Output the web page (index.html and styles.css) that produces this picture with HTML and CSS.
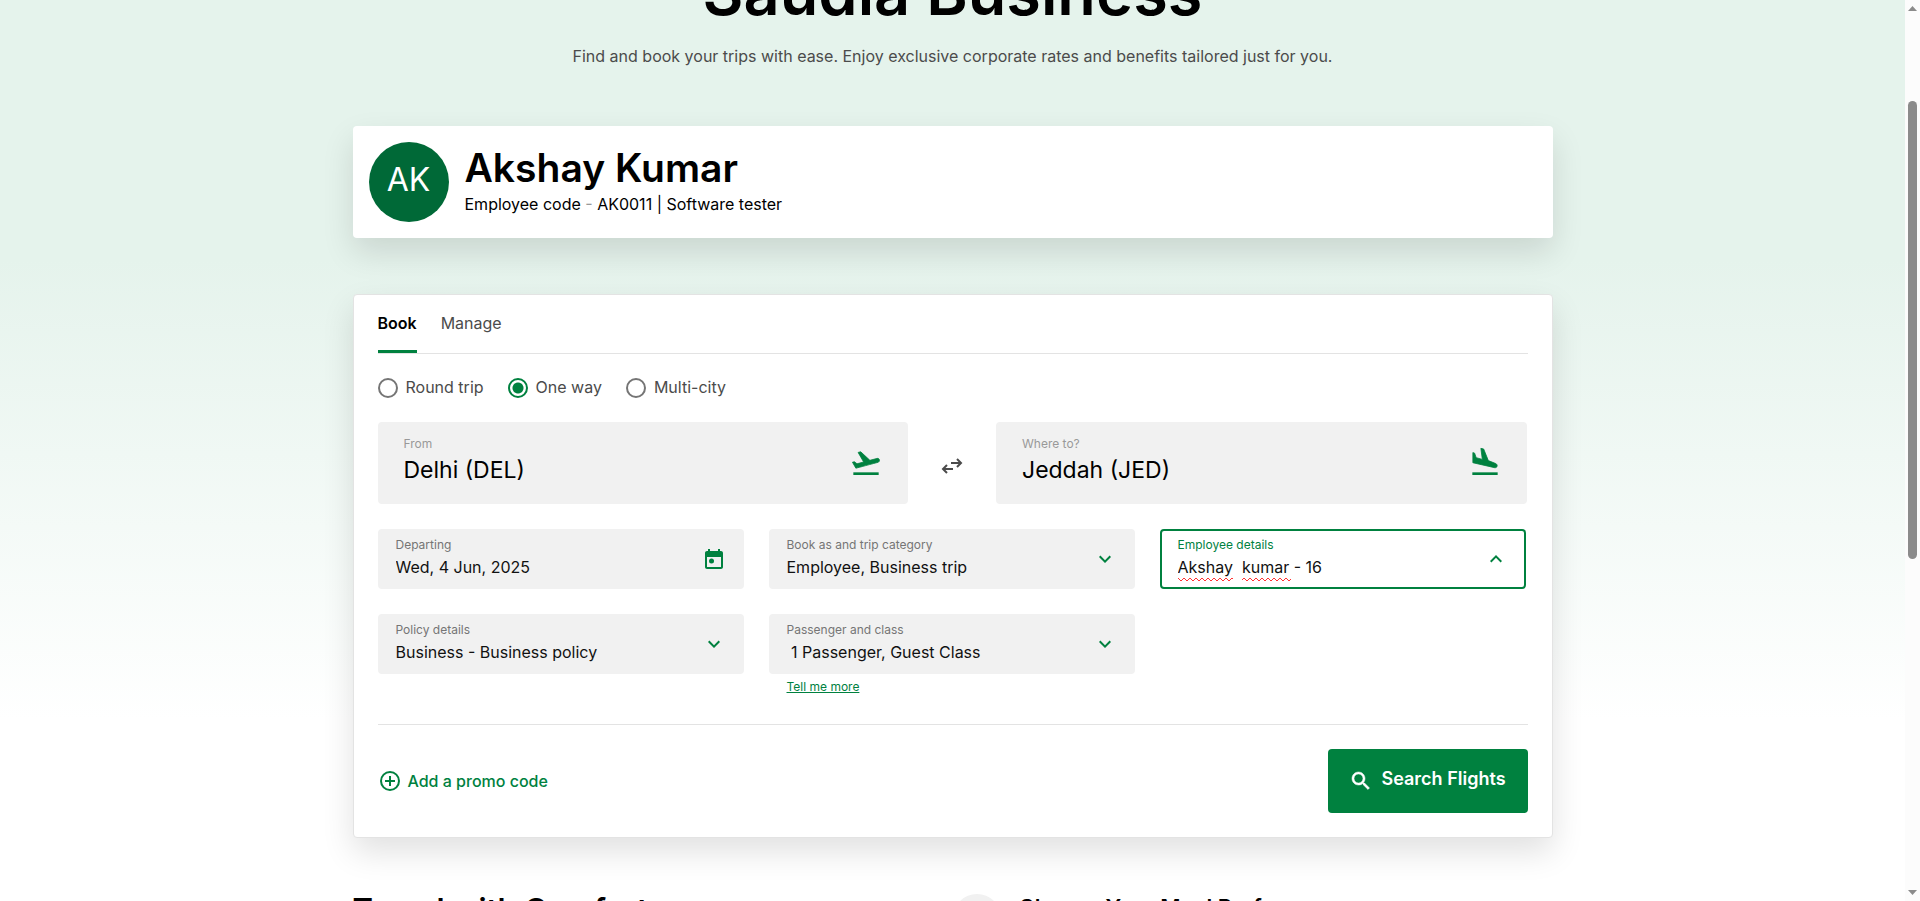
FILE: index.html
```html
<!DOCTYPE html>
<html lang="en">
<head>
<meta charset="utf-8">
<meta name="viewport" content="width=device-width, initial-scale=1">
<title>Saudia Business</title>
<link rel="stylesheet" href="styles.css">
</head>
<body>
<div class="page">
  <main class="container">
    <header class="hero">
      <h1 class="hero-title">Saudia Business</h1>
      <p class="hero-text">Find and book your trips with ease. Enjoy exclusive corporate rates and benefits tailored just for you.</p>
    </header>

    <section class="profile">
      <div class="avatar" aria-hidden="true">AK</div>
      <div class="profile-info">
        <h2 class="profile-name">Akshay Kumar</h2>
        <p class="profile-meta">Employee code <span class="dash">-</span> AK0011 | Software tester</p>
      </div>
    </section>

    <form class="booking">
      <div class="tabs" role="tablist">
        <button class="tab tab-active" type="button" role="tab" aria-selected="true">Book</button>
        <button class="tab" type="button" role="tab" aria-selected="false">Manage</button>
      </div>

      <div class="trip-types" role="radiogroup" aria-label="Trip type">
        <label class="trip-type"><input class="radio" type="radio" name="trip">Round trip</label>
        <label class="trip-type"><input class="radio" type="radio" name="trip" checked>One way</label>
        <label class="trip-type"><input class="radio" type="radio" name="trip">Multi-city</label>
      </div>

      <div class="route">
        <div class="field field-large">
          <div class="field-body">
            <label class="field-label" for="from">From</label>
            <input class="field-control" id="from" type="text" value="Delhi (DEL)">
          </div>
          <svg class="plane" viewBox="0 0 24 24" aria-hidden="true"><path d="M2.5 19h19v2h-19z"/><path class="plane-body" d="M22.07 9.64c-.21-.8-1.04-1.28-1.84-1.06L14.92 10l-6.9-6.43-1.93.51 4.14 7.17-4.97 1.33-1.97-1.54-1.45.39 2.59 4.49s7.12-1.9 16.57-4.43c.81-.23 1.28-1.05 1.07-1.85z"/></svg>
        </div>
        <button class="swap" type="button" aria-label="Swap origin and destination">
          <svg class="swap-icon" viewBox="0 0 24 24" aria-hidden="true"><path d="M11 9h10M17 5l4 4-4 4M13 15H3M7 11l-4 4 4 4"/></svg>
        </button>
        <div class="field field-large">
          <div class="field-body">
            <label class="field-label" for="to">Where to?</label>
            <input class="field-control" id="to" type="text" value="Jeddah (JED)">
          </div>
          <svg class="plane" viewBox="0 0 24 24" aria-hidden="true"><path d="M2.5 19h19v2h-19z"/><path class="plane-body" d="M2.900 4.200 4.200 4.600 5.400 8 10 9.300 8.900 1 11 1.500 14.500 10.200 20 12.400c1.900.9 1.300 3.400-.8 3.100L2.900 11.800z"/></svg>
        </div>
      </div>

      <div class="details">
        <div class="field">
          <div class="field-body">
            <label class="field-label" for="depart">Departing</label>
            <input class="field-control" id="depart" type="text" value="Wed, 4 Jun, 2025">
          </div>
          <svg class="icon" viewBox="0 0 24 24" aria-hidden="true"><path d="M19 4h-1V2h-2v2H8V2H6v2H5c-1.110 0-2 .9-2 2v14c0 1.100.89 2 2 2h14c1.100 0 2-.9 2-2V6c0-1.100-.9-2-2-2zm0 16H5V10h14z"/><circle cx="9.500" cy="14" r="2.500"/></svg>
        </div>
        <div class="field">
          <div class="field-body">
            <label class="field-label" for="category">Book as and trip category</label>
            <select class="field-control" id="category"><option>Employee, Business trip</option></select>
          </div>
          <svg class="icon" viewBox="0 0 24 24" aria-hidden="true"><path d="M7.410 8.590 12 13.170l4.590-4.580L18 10l-6 6-6-6z"/></svg>
        </div>
        <div class="field field-focus">
          <div class="field-body">
            <label class="field-label" for="employee">Employee details</label>
            <input class="field-control" id="employee" type="text" role="combobox" aria-expanded="true" value="Akshay  kumar - 16">
            <svg class="squiggles" aria-hidden="true">
              <defs><pattern id="zigzag" width="6" height="5" patternUnits="userSpaceOnUse"><path class="zigzag-line" d="M-1 0 L0 1 L3 4 L6 1 L7 0"/></pattern></defs>
              <rect x="0" y="0" width="55" height="5" fill="url(#zigzag)"/>
              <rect x="64" y="0" width="49" height="5" fill="url(#zigzag)"/>
            </svg>
          </div>
          <svg class="icon" viewBox="0 0 24 24" aria-hidden="true"><path d="M7.410 15.410 12 10.830l4.590 4.580L18 14l-6-6-6 6z"/></svg>
        </div>
        <div class="field">
          <div class="field-body">
            <label class="field-label" for="policy">Policy details</label>
            <select class="field-control" id="policy"><option>Business - Business policy</option></select>
          </div>
          <svg class="icon" viewBox="0 0 24 24" aria-hidden="true"><path d="M7.410 8.590 12 13.170l4.590-4.580L18 10l-6 6-6-6z"/></svg>
        </div>
        <div class="field-group">
          <div class="field">
            <div class="field-body">
              <label class="field-label" for="passenger">Passenger and class</label>
              <select class="field-control" id="passenger"><option>&nbsp;1 Passenger, Guest Class</option></select>
            </div>
            <svg class="icon" viewBox="0 0 24 24" aria-hidden="true"><path d="M7.410 8.590 12 13.170l4.590-4.580L18 10l-6 6-6-6z"/></svg>
          </div>
          <a class="more" href="#more">Tell me more</a>
        </div>
      </div>

      <div class="actions">
        <button class="promo" type="button">
          <svg class="promo-icon" viewBox="0 0 24 24" aria-hidden="true"><circle cx="12" cy="12" r="9"/><path d="M12 7v10M7 12h10"/></svg>
          Add a promo code
        </button>
        <button class="search" type="submit">
          <svg class="search-icon" viewBox="0 0 24 24" aria-hidden="true"><path d="M15.500 14h-.79l-.28-.27C15.410 12.590 16 11.110 16 9.500 16 5.910 13.090 3 9.500 3S3 5.910 3 9.500 5.910 16 9.500 16c1.610 0 3.090-.59 4.230-1.570l.27.28v.79l5 4.990L20.490 19zm-6 0C7.010 14 5 11.990 5 9.500S7.010 5 9.500 5 14 7.010 14 9.500 11.990 14 9.500 14z"/></svg>
          <span class="search-text">Search Flights</span>
        </button>
      </div>
    </form>

    <section class="promos">
      <h2 class="promos-title">Travel with Comfort</h2>
      <div class="feature">
        <div class="feature-dot"></div>
        <h3 class="feature-title">Choose Your Meal Preference</h3>
      </div>
    </section>
  </main>
</div>
<div class="scrollbar" aria-hidden="true">
  <svg class="scroll-arrow" viewBox="0 0 9 5"><path d="M0 5 4.500 0 9 5z"/></svg>
  <div class="scroll-track"><div class="scroll-thumb"></div></div>
  <svg class="scroll-arrow" viewBox="0 0 9 5"><path d="M0 0 4.500 5 9 0z"/></svg>
</div>
</body>
</html>
```

FILE: styles.css
```css
:root {
  --green: #00813f;
  --grey: #4b4b4b;
  --line: #e3e3e3;
  --shadow: 0 14px 32px rgba(0, 0, 0, 0.12);
}

* { box-sizing: border-box; }

body {
  margin: 0;
  height: 100vh;
  display: flex;
  overflow: hidden;
  font-family: Inter, "Liberation Sans", sans-serif;
  font-size: 16px;
  line-height: 24px;
  color: #000;
  background: #fff;
}

h1, h2, h3, p { margin: 0; }

button, input, select { font: inherit; color: inherit; }

button {
  padding: 0;
  border: 0;
  background: none;
  cursor: pointer;
}

.page {
  flex: 1;
  overflow: hidden;
  background: linear-gradient(#e5f3ec 0, #e5f3ec 260px, #fff 720px);
}

.container {
  width: 100%;
  max-width: 1200px;
  margin: 0 auto;
}

.hero {
  margin-top: -48px;
  text-align: center;
}

.hero-title {
  font-size: 63px;
  line-height: 80px;
  font-weight: 600;
}

.hero-text {
  margin-top: 12px;
  color: var(--grey);
}

.profile {
  display: flex;
  gap: 16px;
  align-items: center;
  margin-top: 58px;
  padding: 16px;
  border-radius: 4px;
  background: #fff;
  box-shadow: var(--shadow);
}

.avatar {
  width: 80px;
  height: 80px;
  border-radius: 50%;
  background: #006937;
  color: #fff;
  font-size: 32px;
  line-height: 76px;
  text-align: center;
}

.profile-info { padding-bottom: 4px; }

.profile-name {
  font-size: 39px;
  line-height: 48px;
  font-weight: 600;
}

.dash { color: #999; }

.booking {
  margin-top: 56px;
  padding: 8px 24px 24px;
  border: 1px solid var(--line);
  border-radius: 4px;
  background: #fff;
  box-shadow: var(--shadow);
}

.tabs {
  display: flex;
  gap: 24px;
  border-bottom: 1px solid var(--line);
}

.tab {
  height: 50px;
  padding-bottom: 7px;
  border-bottom: 3px solid transparent;
  color: var(--grey);
}

.tab-active {
  border-color: var(--green);
  color: #000;
  font-weight: 600;
}

.trip-types {
  display: flex;
  gap: 24px;
  margin-top: 21px;
  color: var(--grey);
}

.trip-type {
  display: flex;
  gap: 8px;
}

.radio {
  appearance: none;
  width: 20px;
  height: 20px;
  margin: 3px 0 0;
  border: 2px solid #757575;
  border-radius: 50%;
}

.radio:checked {
  border-color: var(--green);
  background: radial-gradient(circle, var(--green) 5px, transparent 6px);
}

.route {
  display: grid;
  grid-template-columns: 1fr 88px 1fr;
  align-items: center;
  margin-top: 23px;
  padding-right: 1px;
}

.swap {
  display: flex;
  justify-content: center;
  padding-top: 6px;
}

.swap-icon {
  width: 24px;
  height: 24px;
  fill: none;
  stroke: var(--grey);
  stroke-width: 2;
}

.details {
  display: grid;
  grid-template-columns: repeat(3, 1fr);
  gap: 25px;
  margin-top: 25px;
  padding-right: 2px;
}

.field {
  display: flex;
  align-items: center;
  height: 60px;
  padding: 0 16px;
  border: 2px solid #f1f1f1;
  border-radius: 4px;
  background: #f1f1f1;
}

.field-focus {
  border-color: var(--green);
  background: #fff;
}

.field-body {
  position: relative;
  flex: 1;
  min-width: 0;
}

.field-label {
  display: block;
  padding-top: 2px;
  font-size: 12px;
  line-height: 16px;
  color: #757575;
}

.field-focus .field-label { color: var(--green); }

.field-control {
  display: block;
  appearance: none;
  width: 100%;
  height: 24px;
  margin: 2px 0 4px;
  padding: 0;
  border: 0;
  outline: 0;
  background: none;
  color: #111;
}

.field-large {
  height: 82px;
  padding: 0 24px;
}

.field-large .field-label {
  padding-top: 0;
  color: #999;
}

.field-large .field-control {
  height: 32px;
  font-size: 23px;
  color: #000;
}

.squiggles {
  position: absolute;
  left: 0;
  bottom: 1px;
  width: 116px;
  height: 5px;
}

.zigzag-line {
  fill: none;
  stroke: #f33;
}

.icon {
  width: 24px;
  height: 24px;
  fill: var(--green);
}

.plane {
  width: 32px;
  height: 32px;
  fill: var(--green);
}

.plane-body {
  stroke: var(--green);
  stroke-width: 0.6;
  stroke-linejoin: round;
}

.more {
  display: block;
  width: max-content;
  margin: 4px 18px 0;
  font-size: 12px;
  line-height: 18px;
  color: var(--green);
}

.actions {
  display: flex;
  align-items: center;
  justify-content: space-between;
  margin-top: 28px;
  padding-top: 24px;
  border-top: 1px solid var(--line);
}

.promo {
  display: flex;
  align-items: center;
  gap: 6px;
  color: var(--green);
  font-weight: 500;
}

.promo-icon {
  width: 24px;
  height: 24px;
  fill: none;
  stroke: var(--green);
  stroke-width: 2;
}

.search {
  display: flex;
  align-items: center;
  justify-content: center;
  gap: 8px;
  min-width: 200px;
  height: 64px;
  border-radius: 4px;
  background: var(--green);
  color: #fff;
  font-size: 18px;
  font-weight: 600;
}

.search-text { padding-bottom: 4px; }

.search-icon {
  width: 24px;
  height: 24px;
  fill: #fff;
  stroke: #fff;
  stroke-width: 0.5;
}

.promos {
  display: grid;
  grid-template-columns: 1fr 1fr;
  align-items: start;
  margin-top: 56px;
}

.promos-title {
  font-size: 31px;
  line-height: 32px;
  font-weight: 600;
}

.feature {
  display: flex;
  gap: 18px;
}

.feature-dot {
  width: 48px;
  height: 48px;
  border-radius: 50%;
  background: #f1f1f1;
}

.feature-title {
  font-size: 22px;
  line-height: 26px;
  font-weight: 600;
}

.scrollbar {
  display: flex;
  flex-direction: column;
  align-items: center;
  width: 15px;
  padding: 6px 0;
  background: #fcfcfc;
}

.scroll-arrow {
  width: 9px;
  height: 5px;
  fill: #8b8b8b;
}

.scroll-track {
  flex: 1;
  padding-top: 90px;
}

.scroll-thumb {
  width: 9px;
  height: 58%;
  border-radius: 5px;
  background: #8b8b8b;
}
```
